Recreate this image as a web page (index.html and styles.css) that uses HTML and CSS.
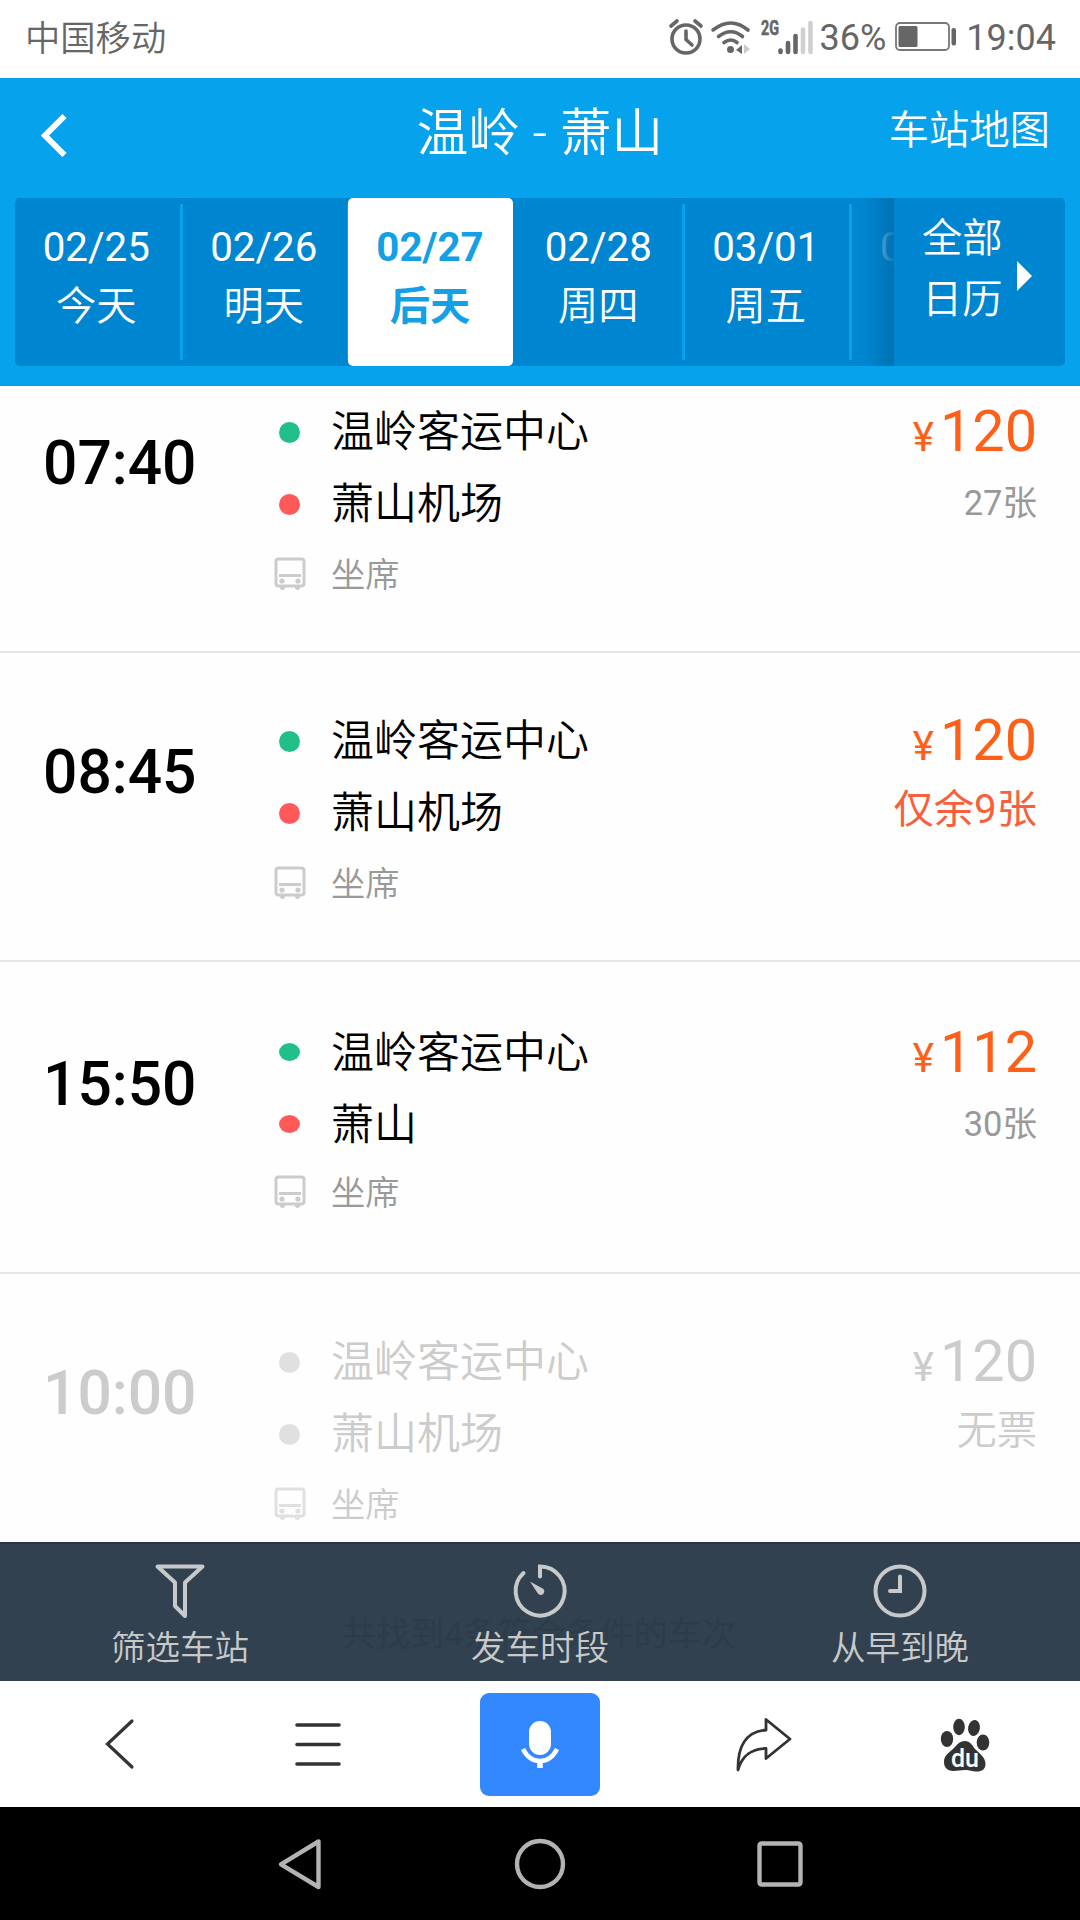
FILE: index.html
```html
<!DOCTYPE html>
<html lang="zh-CN">

<head>
    <meta charset="UTF-8">
    <meta name="viewport" content="width=device-width, initial-scale=1.0">
    <title>温岭 - 萧山</title>
    <link rel="stylesheet" href="styles.css">
</head>

<body>

    <!-- bus icon shared by all rows -->
    <svg class="defs">
        <symbol id="bus" viewBox="0 0 32 34">
            <rect x="2" y="2" width="28" height="27" rx="2.5" fill="none" stroke="currentColor" stroke-width="3" />
            <path d="M5 18.500H27" stroke="currentColor" stroke-width="3" />
            <circle cx="8" cy="24" r="2.600" fill="currentColor" />
            <circle cx="24" cy="24" r="2.600" fill="currentColor" />
            <path d="M6 30h5v1.500q-2.500 3-5 0zM21 30h5v1.500q-2.500 3-5 0z" fill="currentColor" />
        </symbol>
    </svg>

    <div class="status-bar">
        <span class="carrier">中国移动</span>
        <div class="status-icons">
            <svg class="icon-alarm" width="34" height="36" viewBox="0 0 34 36" fill="none" stroke="#666" stroke-width="3.600">
                <circle cx="17" cy="20" r="14" />
                <path d="M17 12v8.500l6 5.500M2 7l6-5M32 7l-6-5" stroke-linecap="round" />
            </svg>
            <svg class="icon-wifi" width="40" height="36" viewBox="0 0 40 36" fill="none" stroke="#666" stroke-width="3.600" stroke-linecap="round">
                <path d="M2 11Q20-3 37 11M7.500 17.500Q20 8 31.500 17.500M13 23.500Q20 18.500 26 23.500" />
                <circle cx="19.500" cy="30.500" r="3.500" fill="#666" stroke="none" />
                <path d="M25 31l6-5v9z" fill="#666" stroke="none" />
                <path d="M33 25l6 5-6 5z" fill="#ccc" stroke="none" />
            </svg>
            <svg class="icon-signal" width="54" height="36" viewBox="0 0 54 36">
                <text class="network" x="1" y="15.500" textLength="18" lengthAdjust="spacingAndGlyphs">2G</text>
                <g stroke="#666" stroke-width="4.600" stroke-linecap="round">
                    <path d="M20.500 31.500v1.500M28 24v9M35.500 17v16" />
                    <path d="M43 10.500v22.500M50.500 4v29" stroke="#d0d0d0" />
                </g>
            </svg>
            <span class="percent">36%</span>
            <svg class="icon-battery" width="62" height="30" viewBox="0 0 62 30">
                <rect x="1" y="1" width="53" height="27" rx="4" fill="none" stroke="#777" stroke-width="1.800" />
                <rect x="3.500" y="4" width="19" height="21" rx="1.500" fill="#666" />
                <rect x="56.500" y="6" width="4.500" height="17.500" rx="2" fill="#666" />
            </svg>
            <span class="clock">19:04</span>
        </div>
    </div>

    <div class="header">
        <div class="title-bar">
            <svg class="back" width="30" height="44" viewBox="0 0 30 44">
                <path d="M25.500 3L6 22.500 25.500 42" fill="none" stroke="#fff" stroke-width="6" />
            </svg>
            <h1>温岭 - 萧山</h1>
            <a class="map-link">车站地图</a>
        </div>
        <div class="dates">
            <div class="date-list">
                <div class="date"><span>02/25</span><span class="day">今天</span></div>
                <div class="date"><span>02/26</span><span class="day">明天</span></div>
                <div class="date active"><span>02/27</span><span>后天</span></div>
                <div class="date"><span>02/28</span><span class="day">周四</span></div>
                <div class="date"><span>03/01</span><span class="day">周五</span></div>
                <div class="date faded"><span>03/02</span></div>
            </div>
            <div class="calendar">
                <div class="calendar-text">全部<br>日历</div>
                <div class="arrow"></div>
            </div>
        </div>
    </div>

    <div class="list">
        <div class="trip first">
            <div class="time">07:40</div>
            <div class="route">
                <div class="stop"><i class="dot start"></i>温岭客运中心</div>
                <div class="stop"><i class="dot end"></i>萧山机场</div>
                <div class="seat"><svg class="bus"><use href="#bus" /></svg>坐席</div>
            </div>
            <div class="price-box">
                <div class="price"><small>¥</small>120</div>
                <div class="left">27张</div>
            </div>
        </div>
        <div class="trip">
            <div class="time">08:45</div>
            <div class="route">
                <div class="stop"><i class="dot start"></i>温岭客运中心</div>
                <div class="stop"><i class="dot end"></i>萧山机场</div>
                <div class="seat"><svg class="bus"><use href="#bus" /></svg>坐席</div>
            </div>
            <div class="price-box">
                <div class="price"><small>¥</small>120</div>
                <div class="left few">仅余9张</div>
            </div>
        </div>
        <div class="trip tall">
            <div class="time">15:50</div>
            <div class="route">
                <div class="stop"><i class="dot start"></i>温岭客运中心</div>
                <div class="stop"><i class="dot end"></i>萧山</div>
                <div class="seat"><svg class="bus"><use href="#bus" /></svg>坐席</div>
            </div>
            <div class="price-box">
                <div class="price"><small>¥</small>112</div>
                <div class="left">30张</div>
            </div>
        </div>
        <div class="trip sold-out">
            <div class="time">10:00</div>
            <div class="route">
                <div class="stop"><i class="dot"></i>温岭客运中心</div>
                <div class="stop"><i class="dot"></i>萧山机场</div>
                <div class="seat"><svg class="bus"><use href="#bus" /></svg>坐席</div>
            </div>
            <div class="price-box">
                <div class="price"><small>¥</small>120</div>
                <div class="left none">无票</div>
            </div>
        </div>
    </div>

    <div class="filter-bar">
        <div class="result-tip">共找到4条符合条件的车次</div>
        <div class="filter">
            <svg width="56" height="56" viewBox="0 0 56 56" fill="none" stroke="#c8c9ca" stroke-width="4" stroke-linejoin="round">
                <path d="M5.500 3.500h45L33 19.500V53l-10-10V19.500z" />
            </svg>
            <span>筛选车站</span>
        </div>
        <div class="filter">
            <svg width="56" height="56" viewBox="0 0 56 56" fill="none" stroke="#c8c9ca" stroke-width="4" stroke-linecap="round">
                <path d="M28 13.500V3.500A24.500 24.500 0 1 1 11.500 10" />
                <path d="M18 18.500L31.500 26Q33.500 29 30.500 31.500 27.500 33 25.500 30z" fill="#c8c9ca" stroke="none" />
            </svg>
            <span>发车时段</span>
        </div>
        <div class="filter">
            <svg width="56" height="56" viewBox="0 0 56 56" fill="none" stroke="#c8c9ca" stroke-width="4">
                <circle cx="28" cy="28" r="24.500" />
                <path d="M28 13.500V28H18" stroke-linecap="round" />
            </svg>
            <span>从早到晚</span>
        </div>
    </div>

    <div class="browser-bar">
        <svg width="30" height="52" viewBox="0 0 30 52" fill="none" stroke="#333" stroke-width="3.200" stroke-linecap="round">
            <path d="M27 3L2.500 26 27 49" />
        </svg>
        <svg width="46" height="46" viewBox="0 0 46 46" stroke="#333" stroke-width="3.600" stroke-linecap="round">
            <path d="M2 4h42M2 23.500h42M2 43h42" />
        </svg>
        <div class="mic">
            <svg width="44" height="52" viewBox="0 0 44 52">
                <rect x="11" y="3" width="22" height="34" rx="11" fill="#fff" />
                <path d="M5 31Q11 43 22 43T39 31" fill="none" stroke="#fff" stroke-width="4.600" />
                <path d="M22 42v8" stroke="#fff" stroke-width="5.500" />
            </svg>
        </div>
        <svg width="56" height="56" viewBox="0 0 56 56" fill="none" stroke="#333" stroke-width="2.800" stroke-linejoin="round">
            <path d="M30 3.500L54 23 30 42.500V32.500C17 32.500 6 39 2 54C1.500 32 9 15.500 30 14z" />
        </svg>
        <svg class="paw" width="52" height="56" viewBox="0 0 52 56" fill="#333">
            <ellipse cx="8" cy="22" rx="6.200" ry="8" />
            <ellipse cx="20" cy="10" rx="5.800" ry="8.200" />
            <ellipse cx="35" cy="11" rx="5.900" ry="8" transform="rotate(10 35 11)" />
            <ellipse cx="44" cy="25.500" rx="6.300" ry="8" />
            <path d="M26 24C31 24 33 28 36 32C40 36 46.500 40 46.500 47C46.500 52 43 54.500 38 54.500C33 54.500 31 53 26 53C21 53 19 54 14.500 54C9 54 5 51 5 45C5 38 10 36 15 31C18 28 20 24 26 24z" />
            <text class="du" x="26" y="50" text-anchor="middle">du</text>
        </svg>
    </div>

    <div class="nav-bar">
        <svg width="48" height="54" viewBox="0 0 48 54"><path d="M42.500 4.500V50L5 27.300z" stroke-linejoin="round" /></svg>
        <svg width="54" height="54" viewBox="0 0 54 54"><circle cx="27" cy="27" r="23" /></svg>
        <svg width="54" height="54" viewBox="0 0 54 54"><rect x="6.500" y="6.500" width="41" height="41" rx="2" /></svg>
    </div>

</body>

</html>
```
FILE: styles.css
```css
* {
    margin: 0;
    padding: 0;
    box-sizing: border-box;
}

body {
    width: 1080px;
    height: 1920px;
    overflow: hidden;
    display: flex;
    flex-direction: column;
    background-color: #fff;
    font-family: Roboto, "Noto Sans CJK SC", sans-serif;
    color: #000;
}

svg {
    display: block;
    flex-shrink: 0;
    overflow: visible;
}

.defs {
    position: absolute;
    width: 0;
    height: 0;
}

/* Phone status bar */
.status-bar {
    height: 78px;
    flex-shrink: 0;
    padding: 0 24px 4px 25px;
    display: flex;
    justify-content: space-between;
    align-items: center;
    color: #666;
    font-size: 36px;
}

.carrier {
    margin-top: -4px;
    font-size: 35.3px;
    font-weight: 350;
}

.status-icons {
    display: flex;
    align-items: center;
}

.icon-wifi {
    margin-left: 8px;
}

.icon-signal {
    margin-left: 9px;
}

.network {
    font-size: 21px;
    font-weight: 700;
    fill: #666;
    stroke: #666;
    stroke-width: 0.6px;
}

.percent {
    margin-top: 1px;
    margin-left: 6px;
}

.icon-battery {
    margin-left: 9px;
}

.clock {
    margin-top: 1px;
    margin-left: 9px;
}

/* Blue header */
.header {
    height: 308px;
    flex-shrink: 0;
    padding: 0 15px;
    background-color: #06a2eb;
    color: #fff;
}

.title-bar {
    height: 120px;
    padding: 0 15px 0 24px;
    display: grid;
    grid-template-columns: 1fr auto 1fr;
    align-items: center;
}

.back {
    margin-top: -6px;
}

.title-bar h1 {
    font-size: 51.6px;
    font-weight: 350;
    line-height: 60px;
    margin-top: -8px;
    margin-left: -9px;
}

.map-link {
    justify-self: end;
    font-size: 40.3px;
    font-weight: 350;
    margin-top: -23px;
}

.dates {
    height: 168px;
    display: flex;
    border-radius: 5px;
    background-color: #0086d0;
    overflow: hidden;
    font-size: 40.3px;
    text-align: center;
}

.date-list {
    position: relative;
    width: 879px;
    display: flex;
    overflow: hidden;
}

.date-list::after {
    content: "";
    position: absolute;
    top: 0;
    right: 0;
    width: 30px;
    height: 168px;
    background: linear-gradient(to right, rgba(0, 110, 175, 0), rgba(0, 112, 176, 0.9));
}

.date {
    width: 167.5px;
    flex-shrink: 0;
    padding: 20px 5px 0 0;
    display: flex;
    flex-direction: column;
    line-height: 59px;
    background: linear-gradient(#06a2eb, #06a2eb) right center / 3px 156px no-repeat;
}

.day {
    font-weight: 350;
}

.date.active {
    width: 165px;
    margin-left: -2px;
    margin-right: 4px;
    padding-right: 1px;
    border-radius: 5px;
    background: #fff;
    color: #14a0e4;
    font-weight: 700;
}

/* next date, half hidden under the calendar button */
.date.faded {
    padding-left: 28px;
    text-align: left;
    background: none;
    color: #8fcdf0;
}

.calendar {
    flex: 1;
    padding: 10px 0 0 28px;
    display: flex;
    line-height: 61px;
    font-weight: 350;
}

.arrow {
    margin: 53px 0 0 14px;
    width: 0;
    height: 0;
    border-left: 15px solid #fff;
    border-top: 15px solid transparent;
    border-bottom: 15px solid transparent;
}

/* Trips */
.list {
    height: 1156px;
    flex-shrink: 0;
    overflow: hidden;
    background-color: #fefefe;
}

.trip {
    height: 309px;
    padding: 49px 43px 0 43px;
    display: grid;
    grid-template-columns: 231px 1fr auto;
    align-items: start;
    border-bottom: 2px solid #e6e6e6;
}

.trip.first {
    height: 267px;
    padding-top: 7px;
}

.trip.tall {
    height: 312px;
    padding-top: 52px;
}

.time {
    margin-top: 35px;
    font-size: 60.5px;
    font-weight: 500;
    line-height: 72px;
}

.stop,
.seat {
    height: 72px;
    display: flex;
    align-items: center;
    font-size: 43px;
    line-height: 1;
    font-weight: 350;
}

.stop {
    padding-top: 6px;
}

.dot {
    width: 21px;
    height: 21px;
    margin: 0 31px 0 5px;
    border-radius: 50%;
    background-color: #e0e0e0;
}

.dot.start {
    background-color: #20c088;
}

.dot.end {
    background-color: #ff5959;
}

.tall .dot {
    height: 18px;
    margin-top: -3px;
}

.seat {
    padding-top: 4px;
    color: #999;
    font-size: 34.3px;
}

.tall .seat {
    margin-top: -3px;
}

.bus {
    width: 32px;
    height: 34px;
    margin: 0 25px 2px 0;
    color: #ccc;
}

.price-box {
    padding-top: 3px;
    text-align: right;
}

.price {
    color: #ff6018;
    font-size: 57.6px;
    line-height: 72px;
}

.price small {
    margin-right: 6px;
    font-size: 40.3px;
}

.left {
    margin-top: -7px;
    color: #999;
    font-size: 34.5px;
    line-height: 72px;
}

.left.few {
    margin-top: -9px;
    color: #fa5f3c;
    font-size: 40.3px;
}

.left.none {
    margin-top: -9px;
    font-size: 40.3px;
    font-weight: 350;
}

.sold-out {
    border-bottom: none;
}

.sold-out,
.sold-out .price,
.sold-out .seat,
.sold-out .left {
    color: #ccc;
}

.sold-out .bus {
    color: #e0e0e0;
}

/* Filters */
.filter-bar {
    position: relative;
    height: 139px;
    flex-shrink: 0;
    display: flex;
    background-color: #32414f;
    border-top: 2px solid #283645;
    color: #c8c9ca;
    font-size: 34.5px;
}

/* line of the list that shows faintly through the bar */
.result-tip {
    position: absolute;
    top: 64px;
    left: 0;
    width: 1078px;
    text-align: center;
    font-size: 34.1px;
    line-height: 52px;
    color: #2e3c4a;
}

.filter {
    position: relative;
    flex: 1;
    padding-top: 19px;
    display: flex;
    flex-direction: column;
    align-items: center;
}

.filter span {
    margin-top: 3px;
    line-height: 52px;
    font-weight: 350;
}

/* Browser toolbar */
.browser-bar {
    height: 126px;
    flex-shrink: 0;
    display: grid;
    grid-template-columns: 240px 156px 288px 159px 243px;
    align-items: center;
    justify-items: center;
}

.mic {
    width: 120px;
    height: 103px;
    display: flex;
    align-items: center;
    justify-content: center;
    border-radius: 9px;
    background-color: #3388ff;
}

.paw {
    margin-top: 2px;
}

.du {
    font-size: 25px;
    font-weight: 500;
    fill: #fff;
}

/* Android navigation */
.nav-bar {
    height: 113px;
    flex-shrink: 0;
    display: grid;
    grid-template-columns: repeat(3, 240px);
    justify-content: center;
    justify-items: center;
    align-items: center;
    background-color: #000;
    fill: none;
    stroke: #b3b3b3;
    stroke-width: 4.4px;
}
```
